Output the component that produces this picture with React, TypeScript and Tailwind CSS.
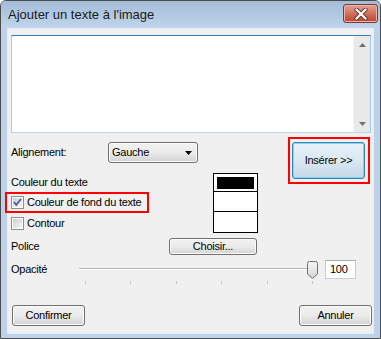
import React from "react";

const font = { fontFamily: '"Liberation Sans", Arial, sans-serif' };

function CheckBox({ checked }: { checked?: boolean }) {
  return (
    <svg width="13" height="13" viewBox="0 0 13 13" className="shrink-0">
      <defs>
        <linearGradient id="cbg" x1="0" y1="0" x2="1" y2="1">
          <stop offset="0" stopColor="#cbcfd5" />
          <stop offset="1" stopColor="#f7f7f7" />
        </linearGradient>
      </defs>
      <rect x="0.5" y="0.5" width="12" height="12" fill="#fff" stroke="#8e8f8f" />
      <rect x="2" y="2" width="9" height="9" fill="url(#cbg)" />
      {checked && (
        <path d="M3 6.2 L5.3 8.8 L10 3" fill="none" stroke="#4a5f97" strokeWidth="1.8" />
      )}
    </svg>
  );
}

function WinButton({ label, className }: { label: string; className: string }) {
  return (
    <div
      className={
        "flex items-center justify-center rounded-[3px] border border-[#707070] bg-gradient-to-b from-[#f2f2f2] via-[#ebebeb] to-[#d3d3d3] text-black shadow-[inset_0_0_0_1px_#fbfbfb] " +
        className
      }
    >
      {label}
    </div>
  );
}

export default function App() {
  return (
    <div className="w-[381px] h-[339px] bg-white" style={font}>
      <div className="w-[381px] h-[339px] flex flex-col border border-[#4c4c4c] rounded-t-[6px] bg-[#bcd2ea] overflow-hidden">
        {/* Title bar */}
        <div className="h-[27px] flex items-start bg-gradient-to-b from-[#a3bcd7] to-[#c0d5eb]">
          <span className="pl-[7px] pt-[6px] text-[13px] leading-[16px] text-[#1a1a1a]">
            Ajouter un texte à l'image
          </span>
          <div className="ml-auto mt-[3px] mr-[2px] w-[35px] h-[19px] rounded-[3px] border border-[#7a3b32] bg-gradient-to-b from-[#e3a595] via-[#d0705c] to-[#c0412b] flex items-center justify-center shadow-[inset_0_0_0_1px_#e9b5a8]">
            <svg width="14" height="12" viewBox="0 0 14 12">
              <path d="M2.5 1.5 L11.5 10.5 M11.5 1.5 L2.5 10.5" stroke="#5a2a22" strokeWidth="4" strokeLinecap="round" />
              <path d="M2.5 1.5 L11.5 10.5 M11.5 1.5 L2.5 10.5" stroke="#ffffff" strokeWidth="2.4" strokeLinecap="round" />
            </svg>
          </div>
        </div>

        {/* Client area */}
        <div className="mx-[6px] mb-[4px] flex-1 flex flex-col bg-[#f0f0f0] border border-[#e4edf7] text-[11px] tracking-[-0.25px] whitespace-nowrap text-black">
          {/* Text box */}
          <div className="ml-[3px] mt-[6px] w-[360px] h-[98px] flex bg-white border border-[#a9cbe6] border-t-[#3d7bad] border-b-[#b7d9ed]">
            <div className="flex-1" />
            <div className="w-[17px] flex flex-col justify-between bg-[#e9e9e9] border-l border-[#f4f4f4]">
              <div className="h-[17px] flex items-center justify-center">
                <svg width="7" height="4" viewBox="0 0 7 4">
                  <path d="M0 4 L3.5 0 L7 4 Z" fill="#6f6f6f" />
                </svg>
              </div>
              <div className="h-[17px] flex items-center justify-center">
                <svg width="7" height="4" viewBox="0 0 7 4">
                  <path d="M0 0 L7 0 L3.5 4 Z" fill="#6f6f6f" />
                </svg>
              </div>
            </div>
          </div>

          {/* Alignment / colours / insert */}
          <div className="mt-[4px] flex items-start">
            <div className="w-[280px] flex flex-col">
              <div className="mt-[5px] h-[21px] flex items-center">
                <span className="pl-[3px] w-[100px]">Alignement:</span>
                <div className="w-[90px] h-[21px] flex items-center rounded-[3px] border border-[#707070] bg-gradient-to-b from-[#f2f2f2] via-[#ebebeb] to-[#d3d3d3] shadow-[inset_0_0_0_1px_#fbfbfb]">
                  <span className="pl-[3px] flex-1">Gauche</span>
                  <svg width="7" height="4" viewBox="0 0 7 4" className="mr-[5px]">
                    <path d="M0 0 L7 0 L3.5 4 Z" fill="#000" />
                  </svg>
                </div>
              </div>
              <div className="mt-[10px] flex">
                <div className="w-[205px] flex flex-col">
                  <div className="h-[19px] flex items-center pl-[3px]">Couleur du texte</div>
                  <div className="ml-[-3px] w-[144px] h-[21px] flex items-center gap-[3px] pl-[4px] border-2 border-[#ff0000]">
                    <CheckBox checked />
                    <span>Couleur de fond du texte</span>
                  </div>
                  <div className="h-[20px] flex items-center gap-[3px] pl-[3px]">
                    <CheckBox />
                    <span>Contour</span>
                  </div>
                </div>
                <div className="w-[45px] flex flex-col border border-black bg-white">
                  <div className="h-[18px] pt-[3px] px-[3px] border-b border-black">
                    <div className="h-[12px] bg-black" />
                  </div>
                  <div className="h-[20px] border-b border-black" />
                  <div className="h-[18px]" />
                </div>
              </div>
            </div>
            <div className="w-[82px] h-[47px] pt-[3px] pl-[2px] border-2 border-[#ff0000]">
              <div className="w-[73px] h-[37px] flex items-center justify-center rounded-[3px] border border-[#3c7fb1] bg-gradient-to-b from-[#e9f2f8] via-[#dae8f2] to-[#c4d9e7] shadow-[inset_0_0_0_1px_#7fd3f7]">
                Insérer &gt;&gt;
              </div>
            </div>
          </div>

          {/* Police */}
          <div className="mt-[5px] h-[17px] flex items-center">
            <span className="pl-[3px] w-[161px]">Police</span>
            <WinButton label="Choisir..." className="w-[88px] h-[17px]" />
          </div>

          {/* Opacité */}
          <div className="mt-[5px] h-[19px] flex items-center">
            <span className="pl-[3px] w-[71px]">Opacité</span>
            <div className="relative w-[240px] h-[19px]">
              <div className="absolute left-0 top-[8px] w-[232px] h-[2px] border-t border-[#b4b4b4] border-b border-b-white" />
              <svg width="11" height="18" viewBox="0 0 11 18" className="absolute left-[228px] top-[1px]">
                <defs>
                  <linearGradient id="thumb" x1="0" y1="0" x2="0" y2="1">
                    <stop offset="0" stopColor="#f4f4f4" />
                    <stop offset="0.5" stopColor="#e6e6e6" />
                    <stop offset="1" stopColor="#d0d0d0" />
                  </linearGradient>
                </defs>
                <path
                  d="M0.5 2.5 Q0.5 0.5 2.5 0.5 H8.5 Q10.5 0.5 10.5 2.5 V13 L5.5 17.5 L0.5 13 Z"
                  fill="url(#thumb)"
                  stroke="#707070"
                />
              </svg>
            </div>
            <div className="ml-[6px] w-[31px] h-[19px] flex items-center pl-[4px] bg-white border border-[#c8cbd0] border-t-[#abadb3]">
              100
            </div>
          </div>

          {/* Ticks */}
          <div className="mt-[2px] ml-[77px] w-[228px] h-[3px] flex justify-between">
            <div className="w-px h-[3px] bg-[#c4c4c4]" />
            <div className="w-px h-[3px] bg-[#c4c4c4]" />
            <div className="w-px h-[3px] bg-[#c4c4c4]" />
            <div className="w-px h-[3px] bg-[#c4c4c4]" />
            <div className="w-px h-[3px] bg-[#c4c4c4]" />
            <div className="w-px h-[3px] bg-[#c4c4c4]" />
          </div>

          {/* Bottom buttons */}
          <div className="mt-[21px] flex justify-between pl-[4px] pr-[1px]">
            <WinButton label="Confirmer" className="w-[73px] h-[21px]" />
            <WinButton label="Annuler" className="w-[73px] h-[21px]" />
          </div>
        </div>
      </div>
    </div>
  );
}
